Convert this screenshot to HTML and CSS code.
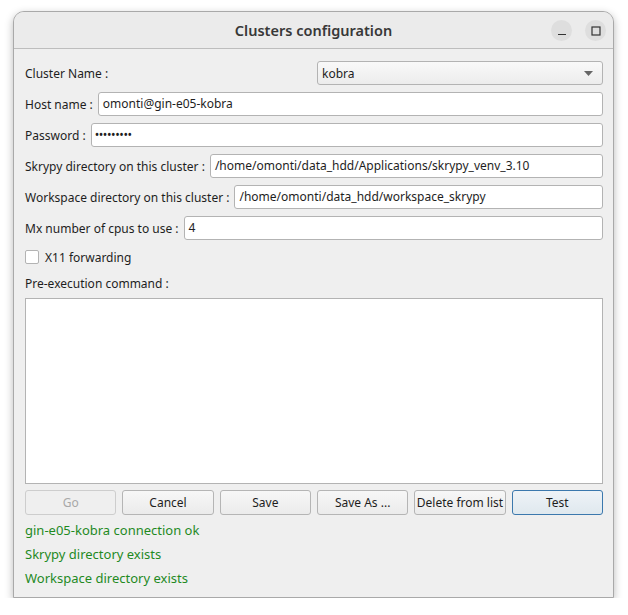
FILE: index.html
```html
<!DOCTYPE html>
<html>
<head>
<meta charset="utf-8">
<link rel="stylesheet" href="styles.css">
</head>
<body>
<div class="window">
  <div class="titlebar">
    <div class="title">Clusters configuration</div>
    <div class="wbtns">
      <div class="wbtn"><svg width="10" height="10" viewBox="0 0 10 10"><path d="M1 8.5h8" stroke="#333" stroke-width="1.2"/></svg></div>
      <div class="wbtn"><svg width="10" height="10" viewBox="0 0 10 10"><rect x="1" y="1" width="8" height="8" fill="none" stroke="#333" stroke-width="1.2"/></svg></div>
    </div>
  </div>
  <div class="content">
    <div class="row">
      <div class="label grow">Cluster Name :</div>
      <div class="combo"><span>kobra</span><svg width="9" height="5" viewBox="0 0 9 5"><path d="M0 0h9L4.5 5z" fill="#666"/></svg></div>
    </div>
    <div class="row">
      <div class="label">Host name :</div>
      <div class="input">omonti@gin-e05-kobra</div>
    </div>
    <div class="row">
      <div class="label">Password :</div>
      <div class="input pw">•••••••••</div>
    </div>
    <div class="row">
      <div class="label">Skrypy directory on this cluster :</div>
      <div class="input">/home/omonti/data_hdd/Applications/skrypy_venv_3.10</div>
    </div>
    <div class="row">
      <div class="label">Workspace directory on this cluster :</div>
      <div class="input">/home/omonti/data_hdd/workspace_skrypy</div>
    </div>
    <div class="row">
      <div class="label">Mx number of cpus to use :</div>
      <div class="input">4</div>
    </div>
    <div class="check"><span class="box"></span>X11 forwarding</div>
    <div class="plabel">Pre-execution command :</div>
    <div class="textarea"></div>
    <div class="buttons">
      <div class="btn disabled">Go</div>
      <div class="btn">Cancel</div>
      <div class="btn">Save</div>
      <div class="btn">Save As ...</div>
      <div class="btn">Delete from list</div>
      <div class="btn default">Test</div>
    </div>
    <div class="status">
      <div>gin-e05-kobra connection ok</div>
      <div>Skrypy directory exists</div>
      <div>Workspace directory exists</div>
    </div>
  </div>
</div>
</body>
</html>
```
FILE: styles.css
```css
* {
  box-sizing: border-box;
}
html, body {
  margin: 0;
  padding: 0;
  background: #ffffff;
}
body {
  font-family: "Noto Sans", "DejaVu Sans", sans-serif;
  font-size: 12px;
  color: #1e1e1e;
}
.window {
  margin: 11px 0 0 13px;
  width: 601px;
  height: 587px;
  background: #efefef;
  border: 1px solid #a9a9a9;
  border-radius: 11px 11px 0 0;
  box-shadow: 0 3px 8px rgba(0,0,0,0.28);
  display: flex;
  flex-direction: column;
  overflow: hidden;
}
.titlebar {
  height: 37px;
  flex: none;
  background: #ebebeb;
  border-bottom: 1px solid #bdbdbd;
  display: flex;
  align-items: center;
  justify-content: center;
  position: relative;
}
.title {
  font-family: "Noto Sans", sans-serif;
  font-weight: 600;
  font-size: 14.5px;
  color: #383838;
  margin-top: -1px;
}
.wbtns {
  position: absolute;
  right: 7px;
  top: 8px;
  display: flex;
  gap: 13px;
}
.wbtn {
  width: 21px;
  height: 21px;
  border-radius: 50%;
  background: #dedede;
  display: flex;
  align-items: center;
  justify-content: center;
}
.content {
  padding: 12px 10px 0 11px;
  display: flex;
  flex-direction: column;
}
.row {
  display: flex;
  align-items: center;
  gap: 5px;
  height: 24px;
  margin-bottom: 7px;
}
.label {
  white-space: nowrap;
  flex: none;
}
.label.grow {
  flex: 1 1 auto;
}
.combo {
  flex: none;
  width: 286px;
  height: 24px;
  border: 1px solid #b3b3b3;
  border-radius: 3px;
  background: linear-gradient(#f9f9f9, #ececec);
  display: flex;
  align-items: center;
  justify-content: space-between;
  padding: 0 9px 0 4px;
}
.input {
  flex: 1;
  height: 24px;
  line-height: 22px;
  border: 1px solid #b3b3b3;
  border-radius: 3px;
  background: #ffffff;
  padding: 0 4px;
  white-space: nowrap;
  overflow: hidden;
}
.input.pw {
  letter-spacing: -0.4px;
  padding-left: 3px;
}
.check {
  display: flex;
  align-items: center;
  gap: 6px;
  height: 20px;
}
.box {
  width: 14px;
  height: 14px;
  border: 1px solid #b3b3b3;
  border-radius: 2px;
  background: #ffffff;
}
.plabel {
  margin-top: 7px;
  height: 20px;
  line-height: 20px;
}
.textarea {
  margin-top: 4px;
  height: 186px;
  border: 1px solid #b3b3b3;
  background: #ffffff;
}
.buttons {
  display: flex;
  gap: 6px;
  margin-top: 6px;
}
.btn {
  flex: 1 1 0;
  height: 25px;
  line-height: 23px;
  text-align: center;
  border: 1px solid #b5b5b5;
  border-radius: 3px;
  background: linear-gradient(#f7f7f7, #ebebeb);
  white-space: nowrap;
}
.btn.disabled {
  color: #a8a8a8;
  border-color: #cdcdcd;
  background: #efefef;
}
.btn.default {
  border-color: #3b78ad;
  background: linear-gradient(#eef3f7, #dfe8ee);
}
.status {
  margin-top: 3px;
  color: #1f8a1f;
  font-size: 13px;
  display: flex;
  flex-direction: column;
}
.status div {
  height: 24px;
  line-height: 24px;
}
```
